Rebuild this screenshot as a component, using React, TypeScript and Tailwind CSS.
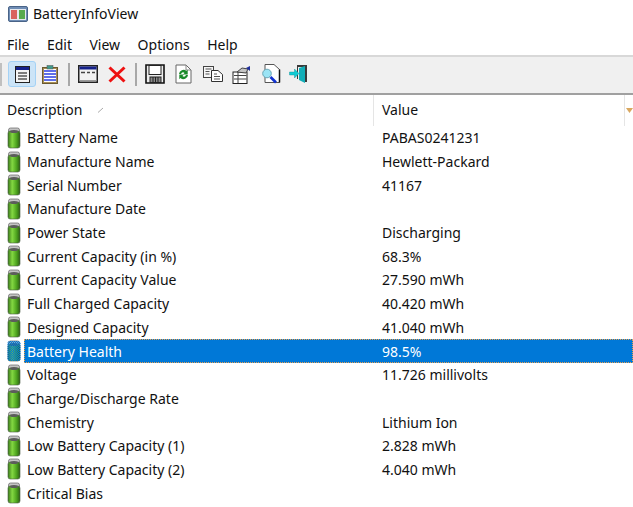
import type { ReactNode } from "react";

const rows: [string, string][] = [
  ["Battery Name", "PABAS0241231"],
  ["Manufacture Name", "Hewlett-Packard"],
  ["Serial Number", "41167"],
  ["Manufacture Date", ""],
  ["Power State", "Discharging"],
  ["Current Capacity (in %)", "68.3%"],
  ["Current Capacity Value", "27.590 mWh"],
  ["Full Charged Capacity", "40.420 mWh"],
  ["Designed Capacity", "41.040 mWh"],
  ["Battery Health", "98.5%"],
  ["Voltage", "11.726 millivolts"],
  ["Charge/Discharge Rate", ""],
  ["Chemistry", "Lithium Ion"],
  ["Low Battery Capacity (1)", "2.828 mWh"],
  ["Low Battery Capacity (2)", "4.040 mWh"],
  ["Critical Bias", ""],
];

function Battery({ selected, id }: { selected: boolean; id: number }) {
  return (
    <svg width="14" height="22" viewBox="0 0 14 22" className="shrink-0">
      <defs>
        <linearGradient id={`b${id}`} x1="0" x2="1" y1="0" y2="0">
          <stop offset="0" stopColor="#3a7a1a" />
          <stop offset="0.35" stopColor="#84d842" />
          <stop offset="0.7" stopColor="#4fa51f" />
          <stop offset="1" stopColor="#2c5f14" />
        </linearGradient>
        <pattern id={`p${id}`} width="2" height="2" patternUnits="userSpaceOnUse">
          <rect width="1" height="1" fill="#0078d7" />
          <rect x="1" y="1" width="1" height="1" fill="#0078d7" />
        </pattern>
      </defs>
      <rect x="1.5" y="1" width="11" height="5" rx="2" fill="#c4c4c4" stroke="#666" strokeWidth="0.7" />
      <rect x="1" y="4" width="12" height="17" rx="2.2" fill={`url(#b${id})`} stroke="#4a5a44" strokeWidth="0.6" />
      <ellipse cx="7" cy="4.5" rx="4" ry="1.6" fill="#5c5c5c" />
      {selected && <rect x="0.5" y="1" width="13" height="20" rx="2.5" fill="#0078d7" opacity="0.35" />}
      {selected && <rect x="0.5" y="1" width="13" height="20" rx="2.5" fill={`url(#p${id})`} />}
    </svg>
  );
}

function Tool({ children, active, narrow }: { children: ReactNode; active?: boolean; narrow?: boolean }) {
  return (
    <div className={`h-[26px] flex items-center justify-center rounded-[3px] ${narrow ? "w-[28px]" : "w-[29px]"} ${active ? "bg-[#cce4f7] border border-[#a5d2f5]" : ""}`}>
      {children}
    </div>
  );
}

const Sep = () => <div className="w-[2px] h-[23px] mx-[4px] bg-[#a8a8a8]" />;

export default function App() {
  return (
    <div className="w-[633px] h-[507px] overflow-hidden bg-white text-[14px] text-[#111] flex flex-col" style={{ fontFamily: '"Noto Sans", sans-serif' }}>
      <div className="h-[28px] shrink-0 flex items-center gap-[5px] pl-[8px]">
        <svg width="20" height="16" viewBox="0 0 20 16">
          <rect x="0.5" y="0.5" width="19" height="15" rx="1.5" fill="#6f8db5" stroke="#4a6488" />
          <rect x="2" y="3" width="16" height="11" fill="#e6e9ee" />
          <rect x="3" y="4" width="6" height="9" fill="#d9625e" />
          <rect x="11" y="4" width="6" height="9" fill="#58aa4e" />
        </svg>
        <span className="text-[14px] leading-none">BatteryInfoView</span>
      </div>
      <div className="h-[27px] shrink-0 pt-[6px] flex items-center pl-[7px] gap-[17.5px]">
        <span>File</span><span>Edit</span><span>View</span><span>Options</span><span>Help</span>
      </div>
      <div className="h-[40px] shrink-0 pb-[2px] bg-[#f0f0f0] border-t-2 border-t-[#d8d8d8] border-b-2 border-b-[#a0a0a0] flex items-center">
        <div className="w-[2px] h-[23px] mr-[6px] bg-[#c0c0c0]" />
        <Tool active narrow>
          <svg width="15" height="17" viewBox="0 0 15 17"><rect x="0.5" y="0.5" width="14" height="16" fill="#f4f4f4" stroke="#222" /><rect x="1" y="1" width="13" height="3" fill="#14208a" /><path d="M3 7h9M3 10h9M3 13h9" stroke="#555" strokeWidth="1.500" /></svg>
        </Tool>
        <Tool narrow>
          <svg width="16" height="19" viewBox="0 0 16 19"><rect x="0.500" y="2.500" width="15" height="16" fill="#a98e55" stroke="#6a5a30" /><rect x="2" y="4" width="12" height="13" fill="#fff" /><path d="M2 6h12M2 9h12M2 12h12M2 15h12" stroke="#2a3fe0" strokeWidth="1.600" /><rect x="5" y="0.500" width="6" height="3.500" fill="#3f9a8a" stroke="#555" strokeWidth="0.500" /></svg>
        </Tool>
        <Sep />
        <Tool narrow>
          <svg width="20" height="18" viewBox="0 0 20 18"><rect x="0.750" y="0.750" width="18.500" height="16.500" fill="#f2f2f2" stroke="#222" strokeWidth="1.500" /><rect x="1.500" y="1.500" width="17" height="3" fill="#14208a" /><path d="M3 7.500h4M9 7.500h3M14 7.500h3" stroke="#444" strokeWidth="1.500" /><path d="M1.500 15.500h17" stroke="#999" /></svg>
        </Tool>
        <Tool>
          <svg width="18" height="17" viewBox="0 0 18 17"><path d="M1.500 1.500L16.500 15.500M16.500 1.500L1.500 15.500" stroke="#ee1111" strokeWidth="3" /></svg>
        </Tool>
        <Sep />
        <Tool narrow>
          <svg width="20" height="20" viewBox="0 0 20 20"><path d="M1 1h18v18H1z" fill="#ededed" stroke="#111" strokeWidth="1.600" /><rect x="4" y="1.500" width="12" height="9" fill="#fff" stroke="#222" /><rect x="5" y="13" width="11" height="5.500" fill="#8a8a8a" stroke="#222" /><path d="M8 13v6M10.500 13v6M13 13v6" stroke="#222" /></svg>
        </Tool>
        <Tool>
          <svg width="17" height="20" viewBox="0 0 17 20"><path d="M1 1h10l5 5v13H1z" fill="#fff" stroke="#666" /><path d="M11 1v5h5" fill="none" stroke="#888" /><path d="M4 10a4.500 4.500 0 0 1 7.500-3l1.200-1.200v4.700H8l1.600-1.600A2.500 2.500 0 0 0 6 10z" fill="#1a8a2a" /><path d="M13 11a4.500 4.500 0 0 1-7.500 3l-1.200 1.200v-4.700H9l-1.600 1.600A2.500 2.500 0 0 0 11 11z" fill="#1a8a2a" /></svg>
        </Tool>
        <Tool>
          <svg width="20" height="16" viewBox="0 0 20 16"><rect x="0.500" y="0.500" width="10" height="11" fill="#f6f6f6" stroke="#444" /><path d="M8.500 4.500H15l4.500 4v7h-11z" fill="#fff" stroke="#333" /><path d="M2.500 3h6M2.500 5.500h4M2.500 8h4M11 8h3M11 10.500h6M11 13h6" stroke="#555" /></svg>
        </Tool>
        <Tool>
          <svg width="20" height="19" viewBox="0 0 20 19"><rect x="1" y="7" width="14" height="11.500" fill="#fff" stroke="#222" /><path d="M2 10.500h12.500M2 14h12.500M6 7v11" stroke="#444" /><path d="M5 7l5-4 6 1-2 4z" fill="#c4c4c4" stroke="#444" /><path d="M14 3l4-2v5z" fill="#1f2f9c" /></svg>
        </Tool>
        <Tool>
          <svg width="20" height="20" viewBox="0 0 20 20"><path d="M4 0.500h9l5.500 5v13H4z" fill="#fff" stroke="#555" /><path d="M18.500 5.500v13" stroke="#111" strokeWidth="1.500" /><circle cx="6" cy="9.500" r="4.300" fill="#9be4f5" stroke="#6aa5b5" /><path d="M9.500 13l5.500 5.500" stroke="#1233d0" strokeWidth="2.600" /></svg>
        </Tool>
        <Tool narrow>
          <svg width="20" height="20" viewBox="0 0 20 20"><path d="M8 1h10v17h-2V3H8z" fill="#3a3a3a" /><path d="M8 3v12h1V3z" fill="#3a3a3a" /><path d="M10 4l6-2v17l-6-3z" fill="#12aeb8" /><path d="M0.500 8h5V5l4.500 4.500L5.500 14v-3h-5z" fill="#10ccd4" stroke="#0b8a92" strokeWidth="0.400" /></svg>
        </Tool>
      </div>
      <div className="h-[31px] flex items-center shrink-0">
        <div className="w-[374px] h-full pb-[2px] border-r border-r-[#e5e5e5] pl-[7px] flex items-center gap-[15px]">
          <span>Description</span>
          <svg width="8" height="6" viewBox="0 0 8 6"><path d="M1 5.500L6 1" stroke="#aaa" /></svg>
        </div>
        <div className="w-[251px] h-full pb-[2px] border-r border-r-[#e5e5e5] pl-[8px] flex items-center">Value</div>
        <svg width="7" height="5" viewBox="0 0 7 5" className="ml-[1px]"><path d="M0 0h7L3.500 5z" fill="#d9a860" /></svg>
      </div>
      <div className="flex flex-col">
        {rows.map(([name, value], i) => {
          const sel = name === "Battery Health";
          return (
            <div key={name} className="h-[23.7px] shrink-0 flex items-center">
              <div className="w-[24px] pl-[7px] flex items-center shrink-0"><Battery selected={sel} id={i} /></div>
              <div className={`h-full flex-1 flex items-center ${sel ? "bg-[#0078d7] text-white outline-1 outline-dotted -outline-offset-1 outline-[#e8a050]" : ""}`}>
                <div className="w-[355px] pl-[3px] whitespace-nowrap">{name}</div>
                <div className="pl-[3px] whitespace-nowrap">{value}</div>
              </div>
            </div>
          );
        })}
      </div>
    </div>
  );
}
